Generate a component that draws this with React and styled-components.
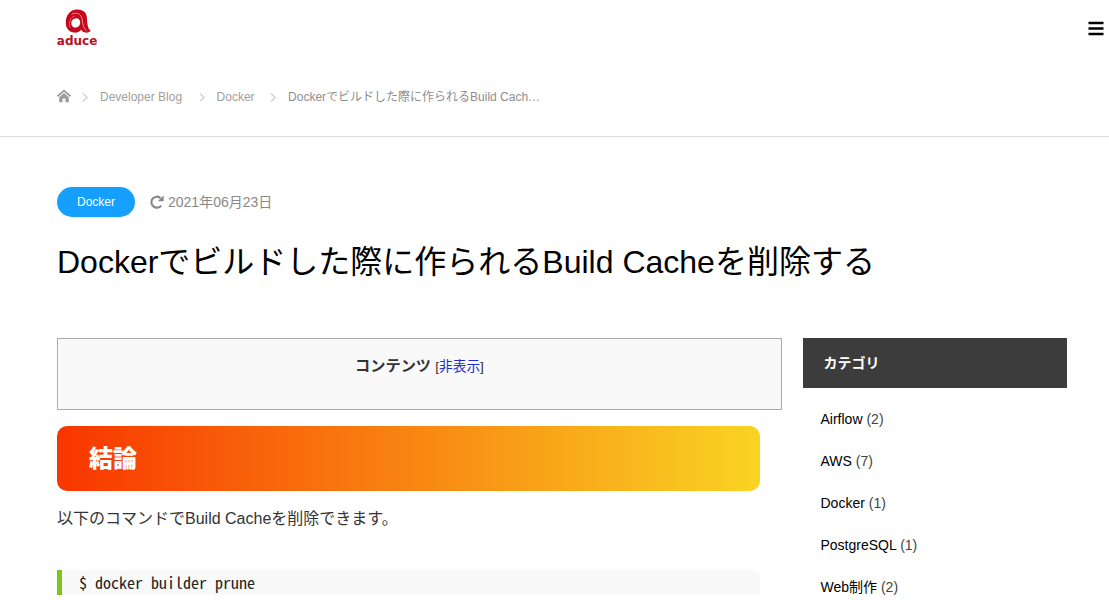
import React from "react";
import styled, { createGlobalStyle } from "styled-components";

const GlobalStyle = createGlobalStyle`
  * { box-sizing: border-box; }
  body {
    margin: 0;
    background: #fff;
    color: #333;
    font-family: "Liberation Sans", "Noto Sans CJK JP", sans-serif;
    overflow: hidden;
  }
  a { color: inherit; text-decoration: none; }
`;

const Page = styled.div`
  height: 600px;
  overflow: hidden;
`;

const Header = styled.header`
  display: flex;
  justify-content: space-between;
  height: 57px;
  padding: 8px 5px 0 54px;
`;

const Logo = styled.svg`
  display: block;
  width: 48px;
  height: 46px;
  overflow: visible;
`;

const MenuButton = styled.button`
  width: 16px;
  height: 16px;
  margin: 13px 0 0;
  padding: 0;
  border: 0;
  background: none;
`;

const MenuIcon = styled.svg`
  display: block;
  width: 16px;
  height: 16px;
`;

const Breadcrumb = styled.nav`
  display: flex;
  align-items: center;
  height: 80px;
  padding-left: 57px;
  border-bottom: 1px solid #ddd;
  font-size: 12px;
  line-height: 18px;
`;

const Crumb = styled.a`
  white-space: nowrap;
  color: ${(p) => (p.$current ? "#8e8e8e" : "#a0a0a0")};
`;

const HomeIcon = styled.svg`
  display: block;
  width: 14px;
  height: 14px;
  margin-bottom: 1px;
`;

const Chevron = styled.svg`
  display: block;
  width: 6px;
  height: 9px;
  margin: 1px 12px 0 ${(p) => p.$before}px;
`;

const Container = styled.main`
  width: 1010px;
  margin-left: 57px;
  padding-top: 50px;
`;

const Meta = styled.div`
  display: flex;
  align-items: center;
  height: 30px;
`;

const Pill = styled.a`
  width: 78px;
  height: 30px;
  border-radius: 15px;
  background: #159fff;
  color: #fff;
  font-size: 12px;
  line-height: 30px;
  text-align: center;
`;

const UpdateIcon = styled.svg`
  display: block;
  width: 14px;
  height: 14px;
  margin: 0 4px 0 15px;
`;

const DateText = styled.time`
  font-size: 14px;
  line-height: 30px;
  color: #888;
`;

const Title = styled.h1`
  margin: 21px 0 0;
  height: 48px;
  font-size: 32px;
  font-weight: 400;
  line-height: 48px;
  color: #000;
  white-space: nowrap;
`;

const Columns = styled.div`
  display: grid;
  grid-template-columns: 725px 264px;
  justify-content: space-between;
  align-items: start;
  margin-top: 52px;
`;

const Article = styled.article`
  display: flex;
  flex-direction: column;
  align-items: flex-start;
`;

const Contents = styled.div`
  width: 725px;
  height: 72px;
  padding-top: 14px;
  border: 1px solid #aaa;
  background: #f9f9f9;
  font-size: 15.2px;
  line-height: 26px;
  text-align: center;
`;

const ContentsToggle = styled.span`
  font-size: 13.68px;
  a { color: #1a2fd0; }
`;

const Heading = styled.h2`
  width: 703px;
  height: 65px;
  margin: 16px 0 0;
  padding-left: 32px;
  border-radius: 10px;
  background: linear-gradient(to right, #f83600 0%, #f9d423 100%);
  color: #fff;
  font-size: 24px;
  font-weight: 900;
  line-height: 65px;
`;

const Paragraph = styled.p`
  margin: 12px 0 0;
  font-size: 16px;
  line-height: 32px;
`;

const Code = styled.pre`
  width: 703px;
  height: 25px;
  margin: 35px 0 0;
  padding-left: 17px;
  border-left: 5px solid #7fc41c;
  border-radius: 0 6px 0 0;
  background: #f9f9f9;
  color: #222;
  font-family: "Noto Sans Mono CJK JP", "DejaVu Sans Mono", monospace;
  font-size: 16px;
  line-height: 24px;
`;

const SideTitle = styled.h3`
  height: 50px;
  margin: 0;
  padding-left: 20.5px;
  background: #3c3c3c;
  color: #fff;
  font-size: 14px;
  font-weight: 700;
  line-height: 50px;
`;

const CategoryList = styled.ul`
  margin: 10px 0 0;
  padding: 0 0 0 17.5px;
  list-style: none;
`;

const Category = styled.li`
  height: 42px;
  font-size: 14px;
  line-height: 42px;
  color: #444;
  a { color: #000; }
`;

const categories = [
  ["Airflow", 2],
  ["AWS", 7],
  ["Docker", 1],
  ["PostgreSQL", 1],
  ["Web制作", 2],
];

const Separator = ({ before }) => (
  <Chevron $before={before} viewBox="0 0 6 9" fill="none" stroke="#a6a6a6">
    <path d="M1 .5 5 4.5 1 8.5" />
  </Chevron>
);

export default function App() {
  return (
    <Page>
      <GlobalStyle />
      <Header>
        <Logo viewBox="-2 0 48 46">
          <path
            fill="#c4081d"
            fillRule="evenodd"
            d="M20.5 1.6C27.5 1.2 30.8 5 31 10.5C31.1 16 31.8 20.6 34.6 22.6C34 24.3 31.5 25 29 24.5C27.2 24.2 26 23.2 25.2 21.8C23.4 24 20.8 24.9 18 24.6C12.8 24 9.5 19.8 9.8 14C10.1 6.9 14.3 2 20.5 1.6ZM20.2 10.2C17.2 10.4 15.2 12.6 15.3 15.4C15.5 18 17.4 19.8 19.8 19.6C22.6 19.4 24.2 17.2 24.2 14.6C24.2 12 22.6 10.1 20.2 10.2Z"
          />
          <path fill="none" stroke="#f3c3c8" strokeWidth=".7" d="M15.5 6.5C19 3.8 25.5 5 26.3 12C26.6 17 28 21 31 23.3" />
          <path fill="none" stroke="#e58a92" strokeWidth=".7" d="M14 19.5C12.5 14 14.5 9.5 19 7.8" />
          <text
            x=".8"
            y="37.1"
            fill="#b90f22"
            fontFamily="DejaVu Sans"
            fontWeight="700"
            fontSize="13"
            textLength="40.5"
            lengthAdjust="spacingAndGlyphs"
          >
            aduce
          </text>
        </Logo>
        <MenuButton aria-label="menu">
          <MenuIcon viewBox="0 0 16 16">
            <path d="M.5 2H15.5M.5 7.5H15.5M.5 13H15.5" stroke="#000" strokeWidth="2.5" />
          </MenuIcon>
        </MenuButton>
      </Header>
      <Breadcrumb>
        <HomeIcon viewBox="0 0 14 14">
          <path d="M.5 7.3 7 1.6l6.5 5.7" fill="none" stroke="#9c9c9c" strokeWidth="1.8" />
          <path d="M2.2 8.2 7 4.1l4.8 4.1V13.2H8.4V9.4H5.6V13.2H2.2Z" fill="#9c9c9c" />
        </HomeIcon>
        <Separator before={11} />
        <Crumb>Developer Blog</Crumb>
        <Separator before={16.5} />
        <Crumb>Docker</Crumb>
        <Separator before={15.5} />
        <Crumb $current>Dockerでビルドした際に作られるBuild Cach…</Crumb>
      </Breadcrumb>
      <Container>
        <Meta>
          <Pill>Docker</Pill>
          <UpdateIcon viewBox="0 0 14 14">
            <path d="M11.2 10.6A5.5 5.5 0 1 1 10.6 3.1" fill="none" stroke="#888" strokeWidth="2.1" />
            <path d="M13.6.5V6.3H7.8Z" fill="#888" />
          </UpdateIcon>
          <DateText>2021年06月23日</DateText>
        </Meta>
        <Title>Dockerでビルドした際に作られるBuild Cacheを削除する</Title>
        <Columns>
          <Article>
            <Contents>
              <b>コンテンツ</b>{" "}
              <ContentsToggle>
                [<a>非表示</a>]
              </ContentsToggle>
            </Contents>
            <Heading>結論</Heading>
            <Paragraph>以下のコマンドでBuild Cacheを削除できます。</Paragraph>
            <Code>$ docker builder prune</Code>
          </Article>
          <aside>
            <SideTitle>カテゴリ</SideTitle>
            <CategoryList>
              {categories.map(([name, count]) => (
                <Category key={name}>
                  <a>{name}</a> ({count})
                </Category>
              ))}
            </CategoryList>
          </aside>
        </Columns>
      </Container>
    </Page>
  );
}
